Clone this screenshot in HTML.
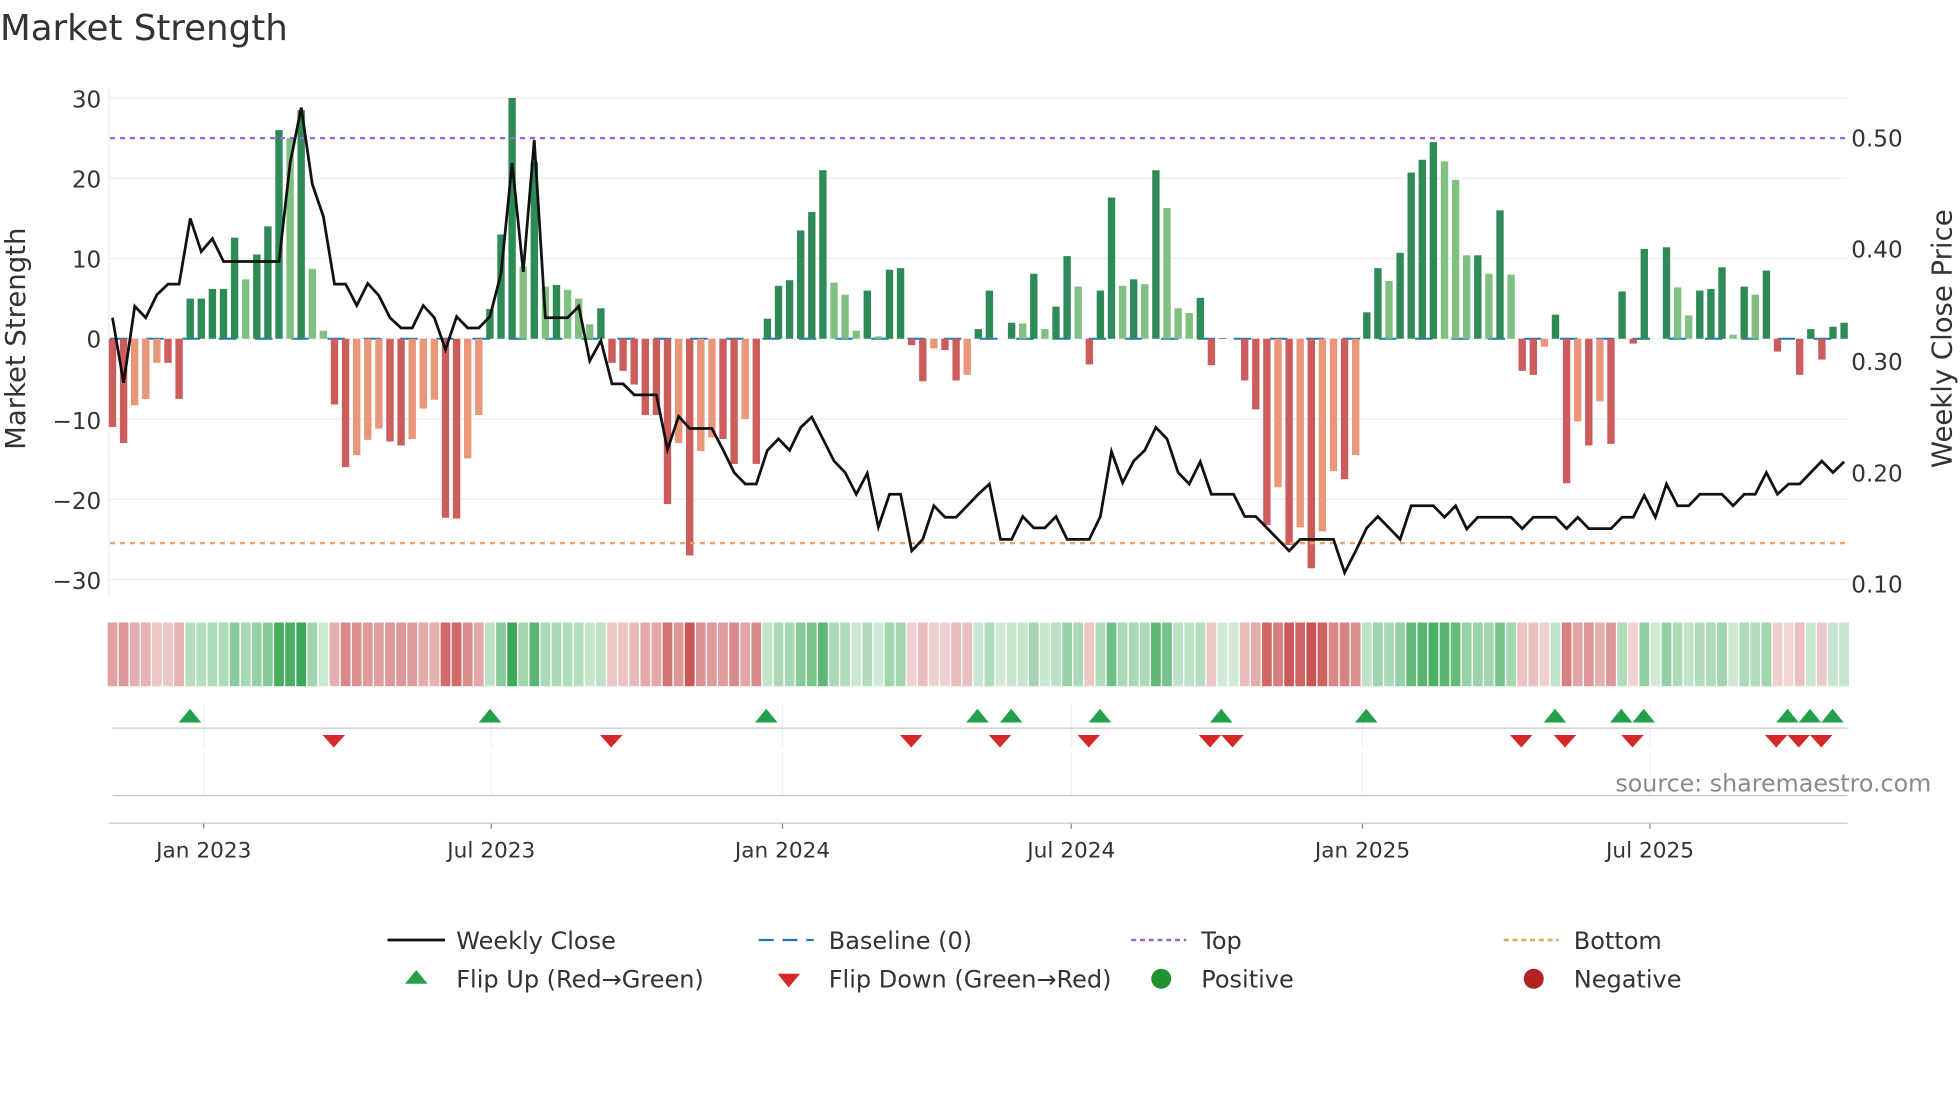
<!DOCTYPE html>
<html><head><meta charset="utf-8"><style>
html,body{margin:0;padding:0;background:#fff;}
svg{display:block;font-family:"DejaVu Sans","Liberation Sans",sans-serif;}
</style></head><body>
<svg id="s" width="1960" height="1102" viewBox="0 0 1568 881.6" xmlns="http://www.w3.org/2000/svg">
<rect x="0" y="0" width="1568" height="881.6" fill="#fff"/>
<text x="0" y="32" font-size="28.5" fill="#333">Market Strength</text>
<g id="grid"></g>
<g id="bars"></g>
<g id="heat"></g>
<g id="marks"></g>
<g font-size="18.5" fill="#333" text-anchor="end">
<text x="81" y="86">30</text><text x="81" y="150">20</text><text x="81" y="214">10</text><text x="81" y="278">0</text>
<text x="81" y="343">−10</text><text x="81" y="407">−20</text><text x="81" y="471">−30</text>
</g>
<g font-size="18.5" fill="#333">
<text x="1481" y="117">0.50</text><text x="1481" y="206">0.40</text><text x="1481" y="296">0.30</text>
<text x="1481" y="385">0.20</text><text x="1481" y="474">0.10</text>
</g>
<text transform="translate(20,271) rotate(-90)" font-size="22" fill="#333" text-anchor="middle">Market Strength</text>
<text transform="translate(1561,271) rotate(-90)" font-size="22" fill="#333" text-anchor="middle">Weekly Close Price</text>
<g font-size="17.3" fill="#333" text-anchor="middle">
<text x="163" y="686">Jan 2023</text><text x="393" y="686">Jul 2023</text><text x="626" y="686">Jan 2024</text>
<text x="857" y="686">Jul 2024</text><text x="1090" y="686">Jan 2025</text><text x="1320" y="686">Jul 2025</text>
</g>
<text x="1545" y="633" font-size="19" fill="#8a8a8a" text-anchor="end">source: sharemaestro.com</text>
<g font-size="19.2" fill="#333">
<line x1="310" y1="752" x2="356" y2="752" stroke="#111" stroke-width="2.2"/>
<text x="365" y="759">Weekly Close</text>
<line x1="607" y1="752" x2="651" y2="752" stroke="#1f77b4" stroke-width="1.8" stroke-dasharray="12,7"/>
<text x="663" y="759">Baseline (0)</text>
<line x1="905" y1="752" x2="949" y2="752" stroke="#9d60e0" stroke-width="2" stroke-dasharray="4,3"/>
<text x="961" y="759">Top</text>
<line x1="1203" y1="752" x2="1247" y2="752" stroke="#f0a060" stroke-width="2" stroke-dasharray="4,3"/>
<text x="1259" y="759">Bottom</text>
<polygon points="324,787 342,787 333,776" fill="#22a04a"/>
<text x="365" y="790">Flip Up (Red→Green)</text>
<polygon points="622,779 640,779 631,790" fill="#d62828"/>
<text x="663" y="790">Flip Down (Green→Red)</text>
<circle cx="929" cy="783" r="8" fill="#23922e"/>
<text x="961" y="790">Positive</text>
<circle cx="1227" cy="783" r="8" fill="#b22222"/>
<text x="1259" y="790">Negative</text>
</g>
</svg>
<script>
var NS="http://www.w3.org/2000/svg";
function el(p,t,a){var e=document.createElementNS(NS,t);for(var k in a)e.setAttribute(k,a[k]);p.appendChild(e);return e;}
var B="-11D,-13D,-8.3L,-7.5L,-3L,-3D,-7.5D,5D,5D,6.2D,6.2D,12.6D,7.4L,10.5D,14D,26D,25L,28.5D,8.7L,1L,-8.2D,-16D,-14.5L,-12.6L,-11.2L,-12.8D,-13.3D,-12.5L,-8.7L,-7.6L,-22.3D,-22.4D,-14.9L,-9.5L,3.7D,13D,30D,9L,22D,6.5L,6.7D,"+
"6.1L,5L,1.8L,3.8D,-3D,-4D,-5.7D,-9.5D,-9.5D,-20.6D,-13L,-27D,-14L,-12.3L,-12.5D,-15.6D,-10L,-15.6D,2.5D,6.6D,7.3D,13.5D,15.8D,21D,7L,5.5L,1L,6D,0.3L,8.6D,8.8D,-0.8D,-5.3D,-1.2L,-1.4D,-5.2D,-4.5L,1.2D,6D,"+
"0D,2D,1.9L,8.1D,1.2L,4D,10.3D,6.5L,-3.2D,6D,17.6D,6.6L,7.4D,6.8L,21D,16.3L,3.8L,3.2L,5.1D,-3.3D,0.1D,0D,-5.2D,-8.8D,-23.2D,-18.5L,-25.7D,-23.5L,-28.6D,-24L,-16.5L,-17.5D,-14.5L,3.3D,8.8D,7.2L,10.7D,20.7D,22.3D,24.5D,"+
"22.1L,19.8L,10.4L,10.4D,8.1L,16D,8L,-4D,-4.5D,-1L,3D,-18D,-10.3L,-13.3D,-7.8L,-13.1D,5.9D,-0.6D,11.2D,0D,11.4D,6.4L,2.9L,6D,6.2D,8.9D,0.5L,6.5D,5.5L,8.5D,-1.6D,0D,-4.5D,1.2D,-2.6D,1.5D,2D";
var P=[595,765,565,595,535,507,507,335,422,388,448,448,448,448,448,448,190,45,245,330,507,507,563,505,537,595,622,622,563,595,678,592,622,622,592,480,190,475,130,595,595,
595,565,708,655,768,768,797,797,797,940,853,885,885,885,940,1000,1030,1030,942,912,942,882,855,912,970,1000,1057,1002,1143,1057,1057,1205,1175,1087,1117,1117,1087,1057,1030,1175,
1175,1115,1145,1145,1115,1175,1175,1175,1115,945,1027,970,942,882,912,1000,1030,972,1057,1057,1057,1115,1115,1145,1175,1205,1175,1175,1175,1175,1262,1205,1145,1115,1145,1175,1087,1087,1087,
1117,1087,1148,1117,1117,1117,1117,1147,1117,1117,1117,1147,1117,1147,1147,1147,1117,1117,1060,1117,1030,1087,1087,1057,1057,1057,1087,1057,1057,1000,1057,1030,1030,1000,970,1000,972];
var bars=B.split(",").map(function(s){return {v:parseFloat(s),d:s.slice(-1)=="D"};});
var g=document.getElementById("grid"),gb=document.getElementById("bars"),gh=document.getElementById("heat"),gm=document.getElementById("marks");
function Y(v){return 271-v*6.42;}
for(var v=-30;v<=30;v+=10){el(g,"line",{x1:87,x2:1478,y1:Y(v),y2:Y(v),stroke:"#eceef2","stroke-width":1});}
el(g,"line",{x1:87,x2:87,y1:70,y2:478,stroke:"#eceef2","stroke-width":1});
[163,393,626,857,1090,1320].forEach(function(x){
 el(g,"line",{x1:x,x2:x,y1:562,y2:598,stroke:"#eef0f3","stroke-width":1});
 el(g,"line",{x1:x,x2:x,y1:602,y2:636,stroke:"#eef0f3","stroke-width":1});
 el(g,"line",{x1:x,x2:x,y1:658,y2:663,stroke:"#888","stroke-width":1});
});
el(g,"line",{x1:90,x2:1478,y1:582.5,y2:582.5,stroke:"#c8c8c8","stroke-width":1});
el(g,"line",{x1:90,x2:1478,y1:636.5,y2:636.5,stroke:"#c8c8c8","stroke-width":1});
el(g,"line",{x1:87,x2:1478,y1:658.5,y2:658.5,stroke:"#c8c8c8","stroke-width":1});
el(gb,"line",{x1:88,x2:1478,y1:271,y2:271,stroke:"#1f77b4","stroke-width":1.6,"stroke-dasharray":"14,15"});
var last=1;
bars.forEach(function(b,i){
 var x=90+i*8.88, w=5.9;
 var col=b.v>=0?(b.d?"#2e8b57":"#80c080"):(b.d?"#cd5c5c":"#e9967a");
 var y1=Y(Math.max(b.v,0)),y2=Y(Math.min(b.v,0));
 if(Math.abs(b.v)>0.05) el(gb,"rect",{x:x-w/2,y:y1,width:w,height:y2-y1,fill:col});
 var s=b.v>0?1:(b.v<0?-1:last); last=s;
 var a=Math.min(0.9,0.22+Math.abs(b.v)/30*0.75);
 el(gh,"rect",{x:x-3.9,y:498,width:7.8,height:51,fill:s>0?"rgb(40,160,70)":"rgb(195,65,65)","fill-opacity":a});
});
el(gb,"line",{x1:88,x2:1478,y1:110.5,y2:110.5,stroke:"#9d60e0","stroke-width":1.8,"stroke-dasharray":"4,4"});
el(gb,"line",{x1:88,x2:1478,y1:434.5,y2:434.5,stroke:"#f0a060","stroke-width":1.8,"stroke-dasharray":"4,4"});
var pts=P.map(function(zy,i){return (90+i*8.88).toFixed(1)+","+(271+(zy-650)*0.3057).toFixed(1);}).join(" ");
el(gb,"polyline",{points:pts,fill:"none",stroke:"#111","stroke-width":2.2,"stroke-linejoin":"miter"});
[152,392,613,782,809,880,977,1093,1244,1297,1315,1430,1448,1466].forEach(function(x){
 el(gm,"polygon",{points:(x-9)+",578 "+(x+9)+",578 "+x+",567",fill:"#22a04a"});});
[267,489,729,800,871,968,986,1217,1252,1306,1421,1439,1457].forEach(function(x){
 el(gm,"polygon",{points:(x-9)+",588 "+(x+9)+",588 "+x+",598",fill:"#d62828"});});
</script>
</body></html>
